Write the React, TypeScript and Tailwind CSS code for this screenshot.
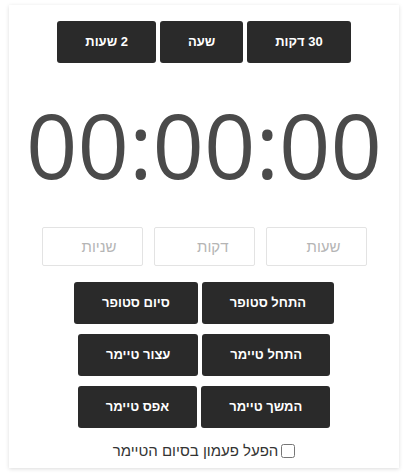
import React, { useState } from "react";

const heb = { fontFamily: '"Liberation Sans", Arial, "DejaVu Sans", sans-serif' };

const DarkButton = ({ label }: { label: string }) => (
  <button
    className="h-[42px] px-7 rounded-[3px] bg-[#2a2a2a] text-white text-[13px] font-bold"
    style={heb}
  >
    {label}
  </button>
);

export default function App() {
  const [bell, setBell] = useState(false);

  return (
    <div className="min-h-[476px] bg-white pt-[5px]" style={heb}>
      <div
        dir="rtl"
        className="ml-[9px] w-[390px] h-[463px] bg-white shadow-[0_1px_4px_rgba(0,0,0,0.14)] flex flex-col items-center pt-4"
      >
        {/* quick presets */}
        <div className="flex gap-1">
          <DarkButton label="30 דקות" />
          <DarkButton label="שעה" />
          <DarkButton label="2 שעות" />
        </div>

        <div
          dir="ltr"
          className="mt-[36px] h-[90px] text-[90px] leading-none text-[#4a4a4a]"
          style={{ fontFamily: '"Open Sans", sans-serif' }}
        >
          00:00:00
        </div>

        <div className="mt-[38px] flex gap-[11px]">
          {["שעות", "דקות", "שניות"].map((p) => (
            <input
              key={p}
              placeholder={p}
              className="w-[101px] h-[39px] border border-[#e3e3e3] rounded-[2px] pr-[25px] text-[15px] text-[#333] placeholder:text-[#b5b5b5] outline-none"
              style={heb}
            />
          ))}
        </div>

        <div className="mt-4 flex flex-col items-center gap-[10px]">
          <div className="flex gap-1">
            <DarkButton label="התחל סטופר" />
            <DarkButton label="סיום סטופר" />
          </div>
          <div className="flex gap-1">
            <DarkButton label="התחל טיימר" />
            <DarkButton label="עצור טיימר" />
          </div>
          <div className="flex gap-1">
            <DarkButton label="המשך טיימר" />
            <DarkButton label="אפס טיימר" />
          </div>
        </div>

        <label className="mt-[12px] flex items-center gap-[3px] text-[15px] text-[#333]">
          <input
            type="checkbox"
            checked={bell}
            onChange={(e) => setBell(e.target.checked)}
            className="w-[14px] h-[14px]"
          />
          הפעל פעמון בסיום הטיימר
        </label>
      </div>
    </div>
  );
}
